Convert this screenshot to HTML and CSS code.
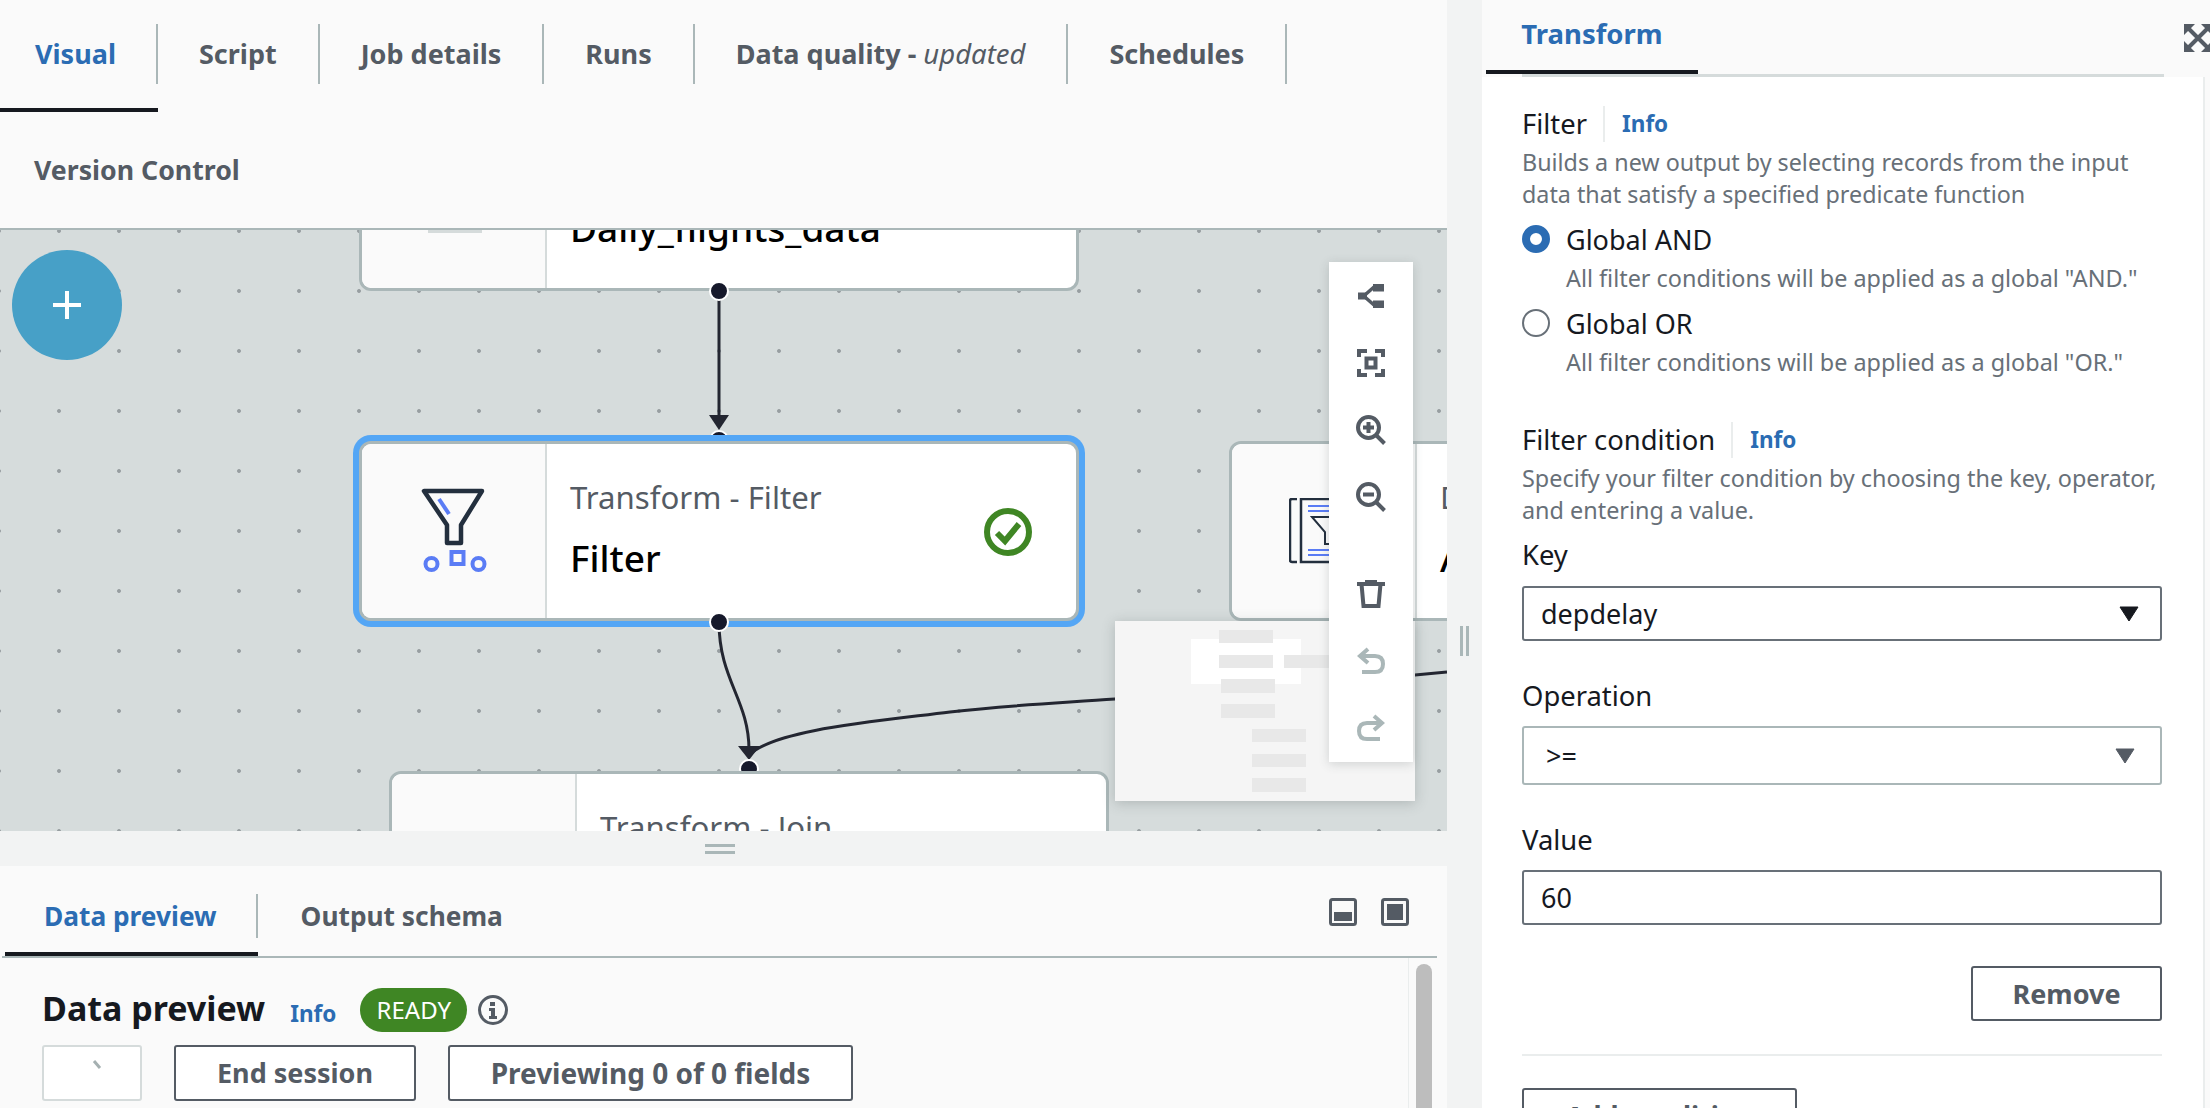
FILE: index.html
```html
<!DOCTYPE html>
<html lang="en">
<head>
    <meta charset="UTF-8">
    <meta name="viewport" content="width=device-width, initial-scale=1.0">
    <title>Transform - Filter</title>
    <link rel="stylesheet" href="styles.css">
</head>
<body>
<div class="app">
    <div class="left-col">
        <!-- job tabs -->
        <div class="job-tabs">
            <div class="job-tab active"><span>Visual</span></div>
            <div class="job-tab"><span>Script</span></div>
            <div class="job-tab"><span>Job details</span></div>
            <div class="job-tab"><span>Runs</span></div>
            <div class="job-tab"><span>Data quality -&nbsp;<em>updated</em></span></div>
            <div class="job-tab"><span>Schedules</span></div>
        </div>
        <div class="version-row">Version Control</div>

        <!-- graph -->
        <div class="canvas">
            <svg class="edges" width="1447" height="601" viewBox="0 230 1447 601">
                <path d="M719 291 V420" class="edge"/>
                <path d="M719 622 C719 680 749 700 749 750" class="edge"/>
                <path d="M749 755 C775 730 870 722 950 712 C1010 705 1060 703 1115 699 L1415 675 L1447 672" class="edge"/>
                <path d="M709 415 H729 L719 430 Z" class="arrow"/>
                <path d="M738 746 H760 L749 760 Z" class="arrow"/>
                <circle cx="719" cy="440" r="9" class="port"/>
                <circle cx="749" cy="769" r="9" class="port"/>
            </svg>

            <div class="node node-daily">
                <div class="node-icon"><i class="icon-stub"></i></div>
                <div class="node-text">
                    <div class="node-type">S3 bucket</div>
                    <div class="node-name">Daily_flights_data</div>
                </div>
            </div>

            <div class="node node-filter">
                <div class="node-icon">
                    <svg width="66" height="86" viewBox="0 0 66 86">
                        <path d="M3 3 H61 L40 37 V55 H26 V37 Z" fill="none" stroke="#232f3e" stroke-width="4.5" stroke-linejoin="round"/>
                        <path d="M18 11 L28 26" stroke="#5a7cf5" stroke-width="4"/>
                        <circle cx="10.5" cy="76" r="6" fill="none" stroke="#5a7cf5" stroke-width="4"/>
                        <rect x="30.5" y="64" width="12" height="12" fill="none" stroke="#5a7cf5" stroke-width="4"/>
                        <circle cx="57.5" cy="76" r="6" fill="none" stroke="#5a7cf5" stroke-width="4"/>
                    </svg>
                </div>
                <div class="node-text">
                    <div class="node-type">Transform - Filter</div>
                    <div class="node-name">Filter</div>
                </div>
                <svg class="node-status" width="48" height="48" viewBox="0 0 48 48">
                    <circle cx="24" cy="24" r="21" fill="none" stroke="#3f8624" stroke-width="6"/>
                    <path d="M13 25 L21 33 L35 16" fill="none" stroke="#3f8624" stroke-width="6"/>
                </svg>
            </div>

            <div class="node node-aggregate">
                <div class="node-icon">
                    <svg width="70" height="66" viewBox="0 0 70 66">
                        <path d="M8 1 H3 Q1 1 1 3 V62 Q1 64 3 64 H8" fill="none" stroke="#232f3e" stroke-width="2.5"/>
                        <rect x="12" y="1" width="52" height="63" fill="none" stroke="#232f3e" stroke-width="2.5"/>
                        <path d="M19 8 H58 M19 13 H58 M19 52 H58 M19 57 H58" stroke="#5a7cf5" stroke-width="2"/>
                        <path d="M23 19 H56 L44 34 V46 H36 V34 Z" fill="none" stroke="#232f3e" stroke-width="2"/>
                    </svg>
                </div>
                <div class="node-text">
                    <div class="node-type">Data - Aggregate</div>
                    <div class="node-name">Aggregate</div>
                </div>
            </div>

            <div class="node node-join">
                <div class="node-icon">
                    <svg width="60" height="40" viewBox="0 0 60 40">
                        <circle cx="19" cy="18" r="15" fill="none" stroke="#232f3e" stroke-width="4"/>
                        <circle cx="41" cy="18" r="15" fill="none" stroke="#232f3e" stroke-width="4"/>
                    </svg>
                </div>
                <div class="node-text">
                    <div class="node-type">Transform - Join</div>
                    <div class="node-name">Join</div>
                </div>
            </div>

            <i class="dot dot-daily"></i>
            <i class="dot dot-filter"></i>

            <div class="add-btn"><i></i></div>

            <!-- minimap -->
            <div class="minimap">
                <div class="mini-view"></div>
                <i class="mini-bar b1"></i>
                <i class="mini-bar b2"></i>
                <i class="mini-bar b3"></i>
                <i class="mini-bar b4"></i>
                <i class="mini-bar b5"></i>
                <i class="mini-bar b6"></i>
                <i class="mini-bar b7"></i>
                <i class="mini-bar b8"></i>
            </div>

            <div class="toolbar">
                <div class="tool">
                    <svg width="28" height="28" viewBox="0 0 28 28"><path d="M1 10.5 H10 V17.5 H1 Z M16 2 H27 V9.5 H16 Z M16 18.5 H27 V26 H16 Z" fill="#545b64"/><path d="M9 12 L17 5 M9 16 L17 23" stroke="#545b64" stroke-width="3.5" fill="none"/></svg>
                </div>
                <div class="tool">
                    <svg width="28" height="28" viewBox="0 0 28 28" fill="none" stroke="#545b64" stroke-width="4"><path d="M2 8 V2 H10 M18 2 H26 V8 M26 20 V26 H18 M10 26 H2 V20"/><rect x="9.5" y="9.5" width="9" height="9"/></svg>
                </div>
                <div class="tool">
                    <svg width="30" height="30" viewBox="0 0 30 30" fill="none" stroke="#545b64" stroke-width="4"><circle cx="12.5" cy="12.5" r="10.5"/><path d="M20 20 L28.5 28.5 M7 12.5 H18 M12.5 7 V18"/></svg>
                </div>
                <div class="tool">
                    <svg width="30" height="30" viewBox="0 0 30 30" fill="none" stroke="#545b64" stroke-width="4"><circle cx="12.5" cy="12.5" r="10.5"/><path d="M20 20 L28.5 28.5 M7 12.5 H18"/></svg>
                </div>
                <div class="tool tool-trash">
                    <svg width="28" height="28" viewBox="0 0 28 28" fill="none" stroke="#545b64" stroke-width="4"><path d="M0 4 H28 M8 2 H20 M4.5 4 L6.5 26 H21.5 L23.5 4"/></svg>
                </div>
                <div class="tool">
                    <svg width="28" height="28" viewBox="0 0 28 28" fill="none" stroke="#aab7b8" stroke-width="4"><path d="M11 2 L3 9 L11 16 M3 9 H18 Q26 9 26 17 Q26 25 18 25 H5"/></svg>
                </div>
                <div class="tool">
                    <svg width="28" height="28" viewBox="0 0 28 28" fill="none" stroke="#aab7b8" stroke-width="4"><path d="M17 2 L25 9 L17 16 M25 9 H10 Q2 9 2 17 Q2 25 10 25 H23"/></svg>
                </div>
            </div>
        </div>

        <div class="drag-row"><i></i><i></i></div>

        <!-- preview -->
        <div class="bottom">
            <div class="bottom-tabs">
                <div class="bottom-tab active"><span>Data preview</span></div>
                <div class="bottom-tab"><span>Output schema</span></div>
                <div class="layout-btns">
                    <svg width="28" height="28" viewBox="0 0 28 28"><rect x="1.5" y="1.5" width="25" height="25" rx="2" fill="none" stroke="#545b64" stroke-width="3"/><rect x="5" y="14" width="18" height="9" fill="#545b64"/></svg>
                    <svg width="28" height="28" viewBox="0 0 28 28"><rect x="1.5" y="1.5" width="25" height="25" rx="2" fill="none" stroke="#545b64" stroke-width="3"/><rect x="6" y="6" width="16" height="16" fill="#545b64"/></svg>
                </div>
            </div>
            <div class="preview-wrap">
                <div class="preview">
                    <div class="preview-head">
                        <h2>Data preview</h2>
                        <a class="info">Info</a>
                        <span class="badge">READY</span>
                        <svg width="32" height="32" viewBox="0 0 32 32"><circle cx="16" cy="16" r="13.5" fill="none" stroke="#545b64" stroke-width="3"/><path d="M13 8 H18 V12 H13 Z M12 14 H18 V22 H20 V25 H12 V22 H14 V17 H12 Z" fill="#545b64"/></svg>
                    </div>
                    <div class="preview-btns">
                        <div class="spin-box">
                            <svg width="14" height="10" viewBox="0 0 14 10"><path d="M3 1 L9 8" stroke="#a5b0b1" stroke-width="3"/></svg>
                        </div>
                        <div class="btn btn-end">End session</div>
                        <div class="btn btn-fields">Previewing 0 of 0 fields</div>
                    </div>
                </div>
                <div class="scroll-col"><div class="scroll-thumb"></div></div>
            </div>
        </div>
    </div>

    <div class="gutter"><i></i><i></i></div>

    <!-- right side form -->
    <div class="side">
        <div class="side-head">
            <div class="side-tab">Transform</div>
            <svg class="expand" width="28" height="28" viewBox="0 0 28 28"><path d="M0 0 H11 L0 11 Z M28 0 H17 L28 11 Z M0 28 H11 L0 17 Z M28 28 H17 L28 17 Z" fill="#545b64"/><path d="M4 4 L24 24 M24 4 L4 24" stroke="#545b64" stroke-width="4"/></svg>
        </div>
        <div class="side-line"></div>
        <div class="side-body">
            <div class="section-title first"><span>Filter</span><a class="info">Info</a></div>
            <p class="desc d1">Builds a new output by selecting records from the input<br>data that satisfy a specified predicate function</p>

            <div class="radio-row r1"><i class="radio on"></i>Global AND</div>
            <p class="radio-desc">All filter conditions will be applied as a global "AND."</p>
            <div class="radio-row r2"><i class="radio"></i>Global OR</div>
            <p class="radio-desc">All filter conditions will be applied as a global "OR."</p>

            <div class="section-title second"><span>Filter condition</span><a class="info">Info</a></div>
            <p class="desc d2">Specify your filter condition by choosing the key, operator,<br>and entering a value.</p>

            <div class="field-label l-key">Key</div>
            <div class="select">depdelay
                <svg width="20" height="16" viewBox="0 0 20 16"><path d="M1 1 H19 L10 15 Z" fill="#16191f" stroke="#16191f" stroke-linejoin="round"/></svg>
            </div>
            <div class="field-label l-op">Operation</div>
            <div class="select select-off">&gt;=
                <svg width="20" height="16" viewBox="0 0 20 16"><path d="M1 1 H19 L10 15 Z" fill="#545b64" stroke="#545b64" stroke-linejoin="round"/></svg>
            </div>
            <div class="field-label l-val">Value</div>
            <input class="text-input" type="text" value="60">

            <div class="remove-row"><div class="btn btn-remove">Remove</div></div>
            <hr class="rule">
            <div class="btn btn-add">Add condition</div>
        </div>
    </div>
</div>
</body>
</html>
```
FILE: styles.css
```css
* {
    box-sizing: border-box;
}
html, body {
    margin: 0;
    height: 100%;
    overflow: hidden;
}
body {
    font-family: "Noto Sans", "Liberation Sans", sans-serif;
    color: #16191f;
    background: #f2f3f3;
}
p, h2 {
    margin: 0;
}
.app {
    display: flex;
    height: 1108px;
}

/* left column */
.left-col {
    width: 1447px;
    display: flex;
    flex-direction: column;
    flex-shrink: 0;
}
.job-tabs {
    display: flex;
    height: 112px;
    background: #fafafa;
}
.job-tab {
    height: 112px;
    padding-top: 24px;
    border-bottom: 4px solid transparent;
    font-size: 27px;
    font-weight: 700;
    color: #545b64;
}
.job-tab span {
    display: block;
    height: 60px;
    line-height: 60px;
    padding: 0 41px;
    border-right: 2px solid #aab7b8;
}
.job-tab em {
    font-size: 27.5px;
    font-weight: 400;
}
.job-tab.active {
    color: #2b6cb3;
    border-bottom-color: #16191f;
}
.job-tab.active span {
    padding: 0 40px 0 35px;
}
.version-row {
    height: 116px;
    padding: 40px 0 0 34px;
    line-height: 36px;
    font-size: 26.7px;
    font-weight: 700;
    color: #545b64;
    background: #fafafa;
}
.canvas {
    position: relative;
    height: 603px;
    overflow: hidden;
    border-top: 2px solid #aab7b8;
    background-color: #d6dcdc;
    background-image: radial-gradient(circle at 30px 30px, #979ea1 1.5px, transparent 2.3px);
    background-size: 60px 60px;
    background-position: 29px -29px;
}
.edges {
    position: absolute;
    left: 0;
    top: 0;
}
.edge {
    fill: none;
    stroke: #232631;
    stroke-width: 3;
}
.arrow {
    fill: #232631;
}
.port {
    fill: #16192b;
    stroke: #fff;
    stroke-width: 2;
}
.dot {
    position: absolute;
    width: 20px;
    height: 20px;
    border-radius: 50%;
    border: 2px solid #fff;
    background: #16192b;
}
.dot-daily {
    left: 709px;
    top: 51px;
}
.dot-filter {
    left: 709px;
    top: 382px;
}

/* nodes on the graph */
.node {
    position: absolute;
    width: 720px;
    height: 180px;
    display: flex;
    border: 3px solid #aab7b8;
    border-radius: 12px;
    background: #fff;
    overflow: hidden;
}
.node-daily {
    left: 359px;
    top: -119px;
}
.node-filter {
    left: 359px;
    top: 211px;
    overflow: visible;
    box-shadow: 0 0 0 6px #54a6f5;
}
.node-aggregate {
    left: 1229px;
    top: 211px;
}
.node-join {
    left: 389px;
    top: 541px;
}
.node-icon {
    position: relative;
    width: 185px;
    flex-shrink: 0;
    display: flex;
    align-items: center;
    justify-content: center;
    background: #fafafa;
    border-right: 2px solid #d5dbdb;
    border-radius: 9px 0 0 9px;
}
.icon-stub {
    position: absolute;
    left: 66px;
    top: 116px;
    width: 54px;
    height: 3px;
    background: #d5dbdb;
}
.node-text {
    padding: 33px 0 0 23px;
}
.node-type {
    font-size: 31.2px;
    line-height: 40px;
    color: #545b64;
}
.node-name {
    margin-top: 21px;
    font-size: 37px;
    font-weight: 500;
    line-height: 40px;
    color: #000;
}
.node-status {
    position: absolute;
    left: 622px;
    top: 64px;
}

.add-btn {
    position: absolute;
    left: 12px;
    top: 20px;
    width: 110px;
    height: 110px;
    border-radius: 50%;
    background: #47a0c7;
}
.add-btn i {
    position: absolute;
    left: 41px;
    top: 41px;
    width: 28px;
    height: 28px;
    background:
        linear-gradient(#fff, #fff) center / 28px 4px no-repeat,
        linear-gradient(#fff, #fff) center / 4px 28px no-repeat;
}

.minimap {
    position: absolute;
    left: 1115px;
    top: 391px;
    width: 300px;
    height: 180px;
    background: #f5f5f5;
    box-shadow: 0 2px 12px rgba(60, 70, 70, 0.25);
}
.mini-view {
    position: absolute;
    left: 76px;
    top: 18px;
    width: 110px;
    height: 45px;
    background: #fff;
}
.mini-bar {
    position: absolute;
    width: 54px;
    height: 13px;
    background: #e8e8e8;
}
.b1 { left: 104px; top: 9px; }
.b2 { left: 104px; top: 34px; }
.b3 { left: 169px; top: 34px; }
.b4 { left: 106px; top: 58px; height: 14px; }
.b5 { left: 106px; top: 83px; height: 14px; }
.b6 { left: 137px; top: 108px; }
.b7 { left: 137px; top: 133px; }
.b8 { left: 137px; top: 157px; height: 14px; }

.toolbar {
    position: absolute;
    left: 1329px;
    top: 32px;
    width: 84px;
    height: 500px;
    display: flex;
    flex-direction: column;
    background: #fff;
    box-shadow: 0 2px 10px rgba(60, 70, 70, 0.2);
}
.tool {
    height: 67.5px;
    display: flex;
    align-items: center;
    justify-content: center;
}
.tool-trash {
    margin-top: 30px;
}

.drag-row {
    height: 35px;
    display: flex;
    flex-direction: column;
    align-items: center;
    justify-content: center;
    gap: 4px;
    padding-right: 7px;
    background: #f2f3f3;
}
.drag-row i {
    width: 30px;
    height: 3px;
    background: #aab7b8;
}

/* data preview */
.bottom {
    flex: 1;
    min-height: 0;
    display: flex;
    flex-direction: column;
    background: #fafafa;
}
.bottom-tabs {
    height: 92px;
    display: flex;
    margin-left: 2px;
    margin-right: 10px;
    padding: 28px 28px 0 3px;
    border-bottom: 2px solid #aab7b8;
}
.bottom-tab {
    height: 62px;
    border-bottom: 4px solid transparent;
    font-size: 26.3px;
    font-weight: 700;
    color: #545b64;
}
.bottom-tab span {
    display: block;
    height: 44px;
    line-height: 44px;
    padding: 0 43px;
}
.bottom-tab.active {
    color: #2b6cb3;
    border-bottom-color: #16191f;
}
.bottom-tab.active span {
    padding: 0 39px;
    border-right: 2px solid #aab7b8;
}
.layout-btns {
    margin-left: auto;
    display: flex;
    gap: 24px;
    padding-top: 4px;
    height: 32px;
}
.preview-wrap {
    flex: 1;
    min-height: 0;
    display: flex;
}
.preview {
    width: 1408px;
    padding: 30px 0 0 42px;
}
.preview-head {
    display: flex;
    align-items: center;
    height: 44px;
}
.preview-head h2 {
    font-size: 34px;
    font-weight: 700;
    line-height: 44px;
    margin-top: -4px;
}
.preview-head .info {
    margin: 6px 24px 0 25px;
}
.badge {
    width: 107px;
    height: 44px;
    line-height: 44px;
    margin-right: 10px;
    border-radius: 22px;
    text-align: center;
    font-size: 24px;
    color: #fff;
    background: #3f8624;
}
.preview-btns {
    display: flex;
    gap: 32px;
    margin-top: 13px;
}
.spin-box {
    width: 100px;
    height: 56px;
    padding: 13px 0 0 47px;
    border: 2px solid #d5dbdb;
    border-radius: 3px;
    background: #fff;
    line-height: 0;
}
.btn {
    height: 56px;
    line-height: 52px;
    border: 2px solid #545b64;
    border-radius: 3px;
    background: #fff;
    text-align: center;
    font-size: 27px;
    font-weight: 700;
    color: #545b64;
}
.btn-end {
    width: 242px;
}
.btn-fields {
    width: 405px;
    font-size: 28px;
}
.scroll-col {
    width: 29px;
    padding: 6px 0 0 7px;
    border-left: 1px solid #eaeded;
}
.scroll-thumb {
    width: 16px;
    height: 100%;
    border-radius: 8px 8px 0 0;
    background: #bdbdbd;
}

.gutter {
    width: 35px;
    flex-shrink: 0;
    display: flex;
    gap: 3px;
    padding: 626px 0 0 13px;
}
.gutter i {
    width: 3px;
    height: 30px;
    background: #aab7b8;
}

/* right side panel */
.side {
    flex: 1;
    min-width: 0;
    position: relative;
    overflow: hidden;
    background: #fafafa;
}
.side-head {
    height: 74px;
    padding-left: 4px;
}
.side-tab {
    width: 212px;
    height: 74px;
    line-height: 68px;
    text-align: center;
    border-bottom: 4px solid #16191f;
    font-size: 27.5px;
    font-weight: 700;
    color: #2b6cb3;
}
.expand {
    position: absolute;
    left: 702px;
    top: 24px;
}
.side-line {
    height: 3px;
    margin: 0 46px 0 40px;
    background: #d5dbdb;
}
.side-body {
    width: 723px;
    height: 1031px;
    padding: 29px 41px 0 40px;
    background: #fff;
    border-right: 2px solid #eaeded;
}
.section-title {
    display: flex;
    align-items: center;
    height: 36px;
    font-size: 27.4px;
    line-height: 36px;
}
.section-title.first {
    margin-bottom: 4px;
}
.section-title.second {
    margin-top: 44px;
}
.section-title span {
    padding-right: 16px;
    border-right: 2px solid #eaeded;
}
.info {
    font-size: 22.5px;
    font-weight: 700;
    color: #2b6cb3;
}
.section-title .info {
    margin-left: 17px;
}
.desc {
    font-size: 23.3px;
    line-height: 32px;
    white-space: nowrap;
    color: #687078;
}
.desc.d2 {
    margin-top: 4px;
    font-size: 23.4px;
}
.radio-row {
    display: flex;
    align-items: center;
    gap: 16px;
    height: 36px;
    font-size: 27px;
}
.radio-row.r1 {
    margin-top: 11px;
}
.radio-row.r2 {
    margin-top: 11px;
}
.radio {
    width: 28px;
    height: 28px;
    border-radius: 50%;
    border: 2px solid #687078;
    background: #fff;
}
.radio.on {
    border: 8px solid #2b6cb3;
}
.radio-desc {
    margin: 5px 0 0 44px;
    font-size: 23.4px;
    line-height: 32px;
    white-space: nowrap;
    color: #687078;
}
.field-label {
    height: 36px;
    line-height: 36px;
    font-size: 27.4px;
}
.l-key {
    margin-top: 11px;
}
.l-op {
    margin-top: 37px;
}
.l-val {
    margin-top: 37px;
}
.select {
    position: relative;
    height: 55px;
    margin-top: 13px;
    padding-left: 17px;
    line-height: 51px;
    font-size: 27px;
    background: #fff;
    border: 2px solid #687078;
    border-radius: 3px;
}
.select svg {
    position: absolute;
    right: 21px;
    top: 18px;
}
.select-off {
    height: 59px;
    margin-top: 12px;
    padding-left: 22px;
    line-height: 55px;
    border-color: #aab7b8;
}
.select-off svg {
    right: 25px;
    top: 20px;
}
.text-input {
    display: block;
    width: 100%;
    height: 55px;
    margin-top: 12px;
    padding: 0 0 0 17px;
    font-family: inherit;
    font-size: 27px;
    color: #16191f;
    background: #fff;
    border: 2px solid #687078;
    border-radius: 3px;
}
.remove-row {
    display: flex;
    justify-content: flex-end;
    margin-top: 41px;
}
.btn-remove {
    width: 191px;
    height: 55px;
}
.rule {
    height: 2px;
    margin: 33px 0 0;
    border: 0;
    background: #eaeded;
}
.btn-add {
    width: 275px;
    height: 55px;
    margin-top: 32px;
}
```
